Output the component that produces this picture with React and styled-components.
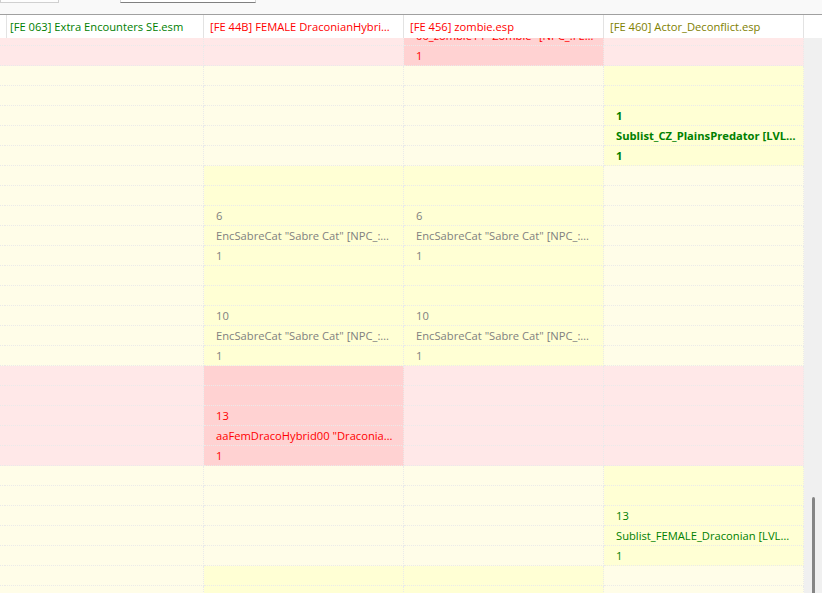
import React from 'react';
import styled, { createGlobalStyle } from 'styled-components';

const GlobalStyle = createGlobalStyle`
  html, body {
    margin: 0;
    padding: 0;
    background: #f0f0f0;
  }
  body {
    font-family: "Open Sans", "Noto Sans", sans-serif;
  }
`;

const shades = {
  lp: '#ffe8e8',
  sp: '#ffd2d2',
  ly: '#fffde8',
  sy: '#ffffd4',
};

const tones = {
  green: '#008000',
  red: '#ff0000',
  olive: '#808000',
  gray: '#7f7f7f',
};

const schemes = {
  A: ['lp', 'lp', 'lp', 'sp', 'lp'],
  B: ['lp', 'lp', 'sp', 'lp', 'lp'],
  Y4: ['ly', 'ly', 'ly', 'ly', 'sy'],
  Y23: ['ly', 'ly', 'sy', 'sy', 'ly'],
};

const COLS = '4px 200px 200px 200px 200px';

const Page = styled.div`
  width: 822px;
  height: 593px;
  overflow: hidden;
  display: flex;
  flex-direction: column;
  background: #f0f0f0;
  font-size: 11.2px;
`;

// strip of controls above the grid, mostly scrolled out of view
const Toolbar = styled.div`
  height: 14px;
  flex: none;
  display: flex;
  align-items: flex-start;
  background: #f9f9f9;
  border-bottom: 1px solid #a0a0a0;
`;

const ToolButton = styled.div`
  width: 57px;
  height: 2px;
  background: #fdfdfd;
  border: 1px solid #d0d0d0;
  border-top: none;
`;

const SearchBox = styled.div`
  width: 134px;
  height: 2px;
  margin-left: 61px;
  background: #ffffff;
  border: 1px solid #d6d6d6;
  border-top: none;
  border-bottom-color: #808080;
`;

const Header = styled.div`
  height: 23px;
  flex: none;
  display: grid;
  grid-template-columns: ${COLS} 1fr;
  background: #ffffff;
`;

const HeadCell = styled.div`
  box-sizing: border-box;
  border-right: ${p => (p.$last ? 'none' : '1px solid #e3e3e3')};
  padding-left: 6px;
  line-height: 23px;
  white-space: nowrap;
  overflow: hidden;
  color: ${p => tones[p.$tone] || '#000'};
`;

const Main = styled.div`
  flex: 1;
  display: flex;
  min-height: 0;
`;

const Body = styled.div`
  width: 805px;
  overflow: hidden;
`;

const Rows = styled.div`
  margin-top: -12px;
`;

const Row = styled.div`
  display: grid;
  grid-template-columns: ${COLS};
  height: 20px;
`;

const Cell = styled.div`
  box-sizing: border-box;
  background: ${p => shades[p.$shade]};
  border-right: 1px dotted #eaeaea;
  border-bottom: 1px dotted #eaeaea;
  padding-left: ${p => (p.$gutter ? 0 : 12)}px;
  padding-right: 4px;
  line-height: 19px;
  white-space: nowrap;
  overflow: hidden;
  color: ${p => tones[p.$tone] || '#000'};
  font-weight: ${p => (p.$bold ? 700 : 400)};
`;

const Scrollbar = styled.div`
  position: relative;
  width: 17px;
  background: #f0f0f0;
`;

const Thumb = styled.div`
  position: absolute;
  left: 7px;
  top: 459px;
  width: 3px;
  height: 140px;
  border-radius: 2px;
  background: #858585;
`;

const headers = [
  { text: '', tone: null },
  { text: '[FE 063] Extra Encounters SE.esm', tone: 'green' },
  { text: '[FE 44B] FEMALE DraconianHybri…', tone: 'red' },
  { text: '[FE 456] zombie.esp', tone: 'red' },
  { text: '[FE 460] Actor_Deconflict.esp', tone: 'olive' },
  { text: '', tone: null },
];

const sabre = 'EncSabreCat "Sabre Cat" [NPC_:…';

const rows = [
  { s: 'A', c: { 3: '00_zombie14 "Zombie" [NPC_:FE…' }, tone: 'red' },
  { s: 'A', c: { 3: '1' }, tone: 'red' },
  { s: 'Y4' },
  { s: 'Y4' },
  { s: 'Y4', c: { 4: '1' }, tone: 'green', bold: true },
  { s: 'Y4', c: { 4: 'Sublist_CZ_PlainsPredator [LVL…' }, tone: 'green', bold: true },
  { s: 'Y4', c: { 4: '1' }, tone: 'green', bold: true },
  { s: 'Y23' },
  { s: 'Y23' },
  { s: 'Y23', c: { 2: '6', 3: '6' }, tone: 'gray' },
  { s: 'Y23', c: { 2: sabre, 3: sabre }, tone: 'gray' },
  { s: 'Y23', c: { 2: '1', 3: '1' }, tone: 'gray' },
  { s: 'Y23' },
  { s: 'Y23' },
  { s: 'Y23', c: { 2: '10', 3: '10' }, tone: 'gray' },
  { s: 'Y23', c: { 2: sabre, 3: sabre }, tone: 'gray' },
  { s: 'Y23', c: { 2: '1', 3: '1' }, tone: 'gray' },
  { s: 'B' },
  { s: 'B' },
  { s: 'B', c: { 2: '13' }, tone: 'red' },
  { s: 'B', c: { 2: 'aaFemDracoHybrid00 "Draconia…' }, tone: 'red' },
  { s: 'B', c: { 2: '1' }, tone: 'red' },
  { s: 'Y4' },
  { s: 'Y4' },
  { s: 'Y4', c: { 4: '13' }, tone: 'green' },
  { s: 'Y4', c: { 4: 'Sublist_FEMALE_Draconian [LVL…' }, tone: 'green' },
  { s: 'Y4', c: { 4: '1' }, tone: 'green' },
  { s: 'Y23' },
  { s: 'Y23' },
];

export default function App() {
  return (
    <>
      <GlobalStyle />
      <Page>
        <Toolbar>
          <ToolButton />
          <SearchBox />
        </Toolbar>
        <Header>
          {headers.map((h, i) => (
            <HeadCell key={i} $tone={h.tone} $last={i === headers.length - 1}>
              {h.text}
            </HeadCell>
          ))}
        </Header>
        <Main>
          <Body>
            <Rows>
              {rows.map((r, ri) => (
                <Row key={ri}>
                  {schemes[r.s].map((shade, ci) => (
                    <Cell
                      key={ci}
                      $shade={shade}
                      $gutter={ci === 0}
                      $tone={r.tone}
                      $bold={r.bold}
                    >
                      {r.c && r.c[ci]}
                    </Cell>
                  ))}
                </Row>
              ))}
            </Rows>
          </Body>
          <Scrollbar>
            <Thumb />
          </Scrollbar>
        </Main>
      </Page>
    </>
  );
}
